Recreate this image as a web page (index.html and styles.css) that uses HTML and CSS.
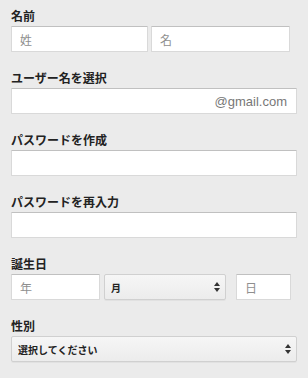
FILE: index.html
```html
<!DOCTYPE html>
<html lang="ja">
<head>
  <meta charset="UTF-8">
  <title>アカウントを作成</title>
  <link rel="stylesheet" href="styles.css">
</head>
<body>
  <form class="signup">
    <div class="group">
      <label class="label">名前</label>
      <div class="row">
        <input class="field half" placeholder="姓">
        <input class="field half last" placeholder="名">
      </div>
    </div>

    <div class="group">
      <label class="label">ユーザー名を選択</label>
      <div class="field suffix-field">
        <input class="bare">
        <span class="suffix">@gmail.com</span>
      </div>
    </div>

    <div class="group">
      <label class="label">パスワードを作成</label>
      <input class="field" type="password">
    </div>

    <div class="group">
      <label class="label">パスワードを再入力</label>
      <input class="field" type="password">
    </div>

    <div class="group">
      <label class="label">誕生日</label>
      <div class="row">
        <input class="field year" placeholder="年">
        <div class="select-wrap month">
          <select class="select">
            <option>月</option>
          </select>
          <svg class="arrows" width="6" height="10" viewBox="0 0 6 10"><path d="M3 0L6 4H0z M3 10L0 6h6z" fill="#333"/></svg>
        </div>
        <input class="field day" placeholder="日">
      </div>
    </div>

    <div class="group">
      <label class="label">性別</label>
      <div class="select-wrap">
        <select class="select">
          <option>選択してください</option>
        </select>
        <svg class="arrows" width="6" height="10" viewBox="0 0 6 10"><path d="M3 0L6 4H0z M3 10L0 6h6z" fill="#333"/></svg>
      </div>
    </div>
  </form>
</body>
</html>
```

FILE: styles.css
```css
* {
  box-sizing: border-box;
}

body {
  margin: 0;
  padding: 7px 11px 0 11px;
  background: #ebebeb;
  font-family: "Noto Sans CJK JP", "Liberation Sans", sans-serif;
  color: #222;
}

.group {
  margin-bottom: 17px;
}

.label {
  display: block;
  font-size: 12px;
  font-weight: bold;
  line-height: 18px;
  margin-bottom: 1px;
}

.row {
  display: flex;
  gap: 4px;
}

.field {
  display: block;
  width: 100%;
  height: 26px;
  margin: 0;
  padding: 0 8px;
  background: #fff;
  border: 1px solid #d9d9d9;
  border-top-color: #c0c0c0;
  border-radius: 1px;
  font-family: "Noto Sans CJK JP", sans-serif;
  font-size: 12px;
  color: #222;
  outline: none;
}

.field::placeholder {
  color: #8f8f8f;
}

.half {
  width: 137px;
}

.half.last {
  width: 139px;
  margin-left: -1px;
}

.suffix-field {
  display: flex;
  align-items: center;
  padding: 0 9px 0 8px;
}

.bare {
  flex: 1;
  min-width: 0;
  border: none;
  outline: none;
  background: transparent;
  height: 22px;
}

.suffix {
  font-family: "Liberation Sans", Arial, sans-serif;
  font-size: 13px;
  color: #777;
}

.year {
  width: 89px;
}

.day {
  width: 55px;
  margin-left: 6px;
}

.select-wrap {
  position: relative;
}

.select-wrap.month {
  width: 122px;
}

.select {
  display: block;
  width: 100%;
  height: 26px;
  margin: 0;
  padding: 0 6px;
  appearance: none;
  -webkit-appearance: none;
  background: linear-gradient(#f6f6f6, #ececec);
  border: 1px solid #d0d0d0;
  border-radius: 2px;
  box-shadow: 0 1px 0 rgba(0, 0, 0, 0.04);
  font-family: "Noto Sans CJK JP", sans-serif;
  font-size: 10px;
  font-weight: bold;
  color: #222;
  outline: none;
}

.arrows {
  position: absolute;
  right: 6px;
  top: 8px;
  pointer-events: none;
}
```
